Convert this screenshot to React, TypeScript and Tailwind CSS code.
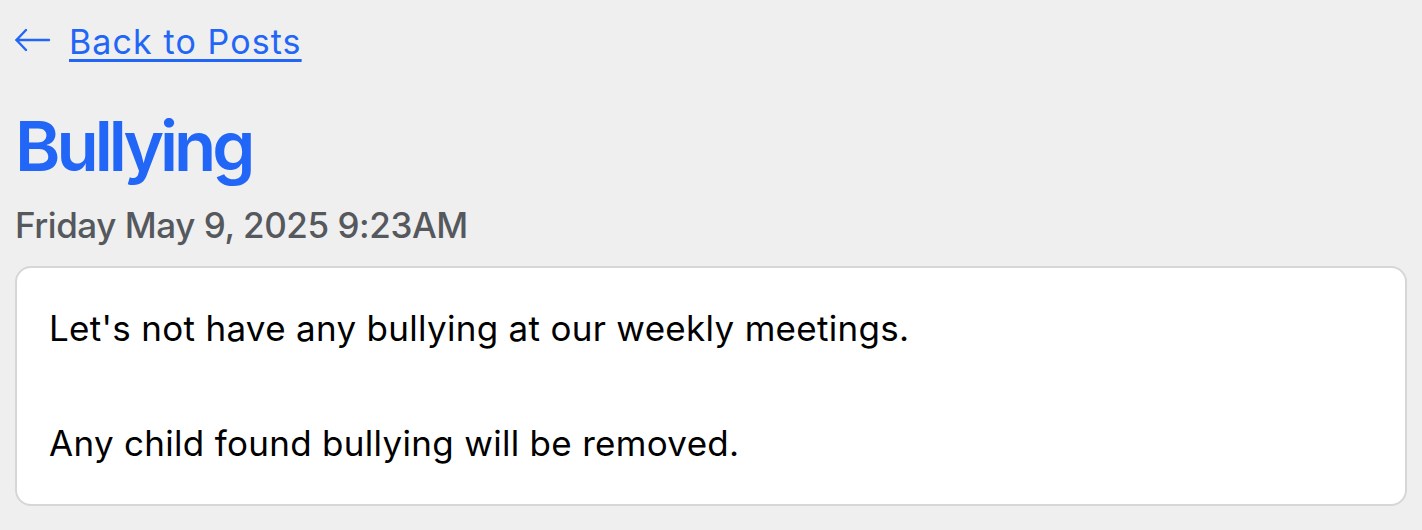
export default function App() {
  return (
    <div className="min-h-screen bg-[#efefef] px-[15px] pt-[22px] pb-6 font-['Inter','Liberation_Sans',sans-serif]">
      {/* Back link */}
      <a href="#" className="flex items-center h-[40px] w-fit text-[#2166f7] text-[34px] leading-[40px]">
        <svg width="36" height="24" viewBox="0 0 36 24" fill="none" stroke="currentColor" strokeWidth="2.4" strokeLinecap="round" strokeLinejoin="round" className="mr-[18px] mt-[-4px]">
          <path d="M1.5 12H34" />
          <path d="M11 2L1.5 12L11 22" />
        </svg>
        <span className="underline underline-offset-[5px] decoration-[2.5px] tracking-[1.1px]">Back to Posts</span>
      </a>

      <h1 className="mt-[48px] text-[#2166f7] text-[69px] leading-[72px] font-semibold tracking-[-4px]">Bullying</h1>

      <div className="mt-[23px] text-[#55585c] text-[35px] leading-[40px] font-medium tracking-[-0.45px]">
        Friday May 9, 2025 9:23AM
      </div>

      <div className="mt-[21px] bg-white border-2 border-[#d6d6d6] rounded-[16px] px-[32px] pt-[39px] pb-[39px]">
        <div className="flex flex-col gap-[72px] text-black text-[35px] leading-[43px] tracking-[0.3px]">
          <p>Let's not have any bullying at our weekly meetings.</p>
          <p>Any child found bullying will be removed.</p>
        </div>
      </div>
    </div>
  );
}
